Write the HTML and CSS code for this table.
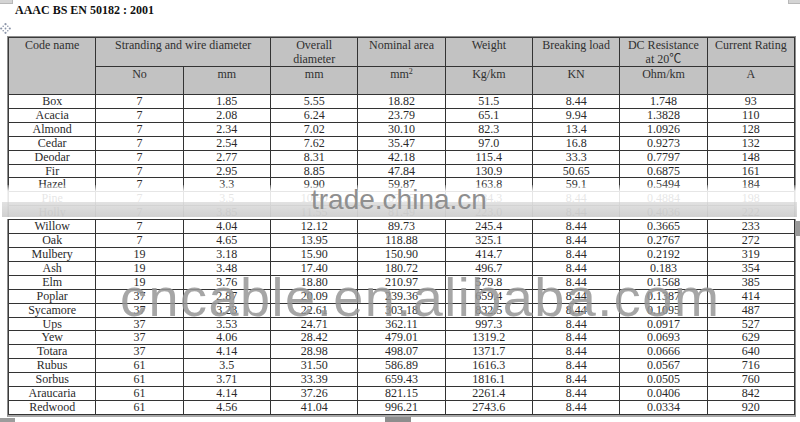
FILE: index.html
```html
<!DOCTYPE html>
<html>
<head>
<meta charset="utf-8">
<title>AAAC BS EN 50182 : 2001</title>
<link rel="stylesheet" href="styles.css">
</head>
<body>
<div class="page">
  <h1 class="title">AAAC BS EN 50182 : 2001</h1>
  <div class="handle">
    <svg class="handle-icon" width="11" height="11" viewBox="0 0 11 11">
      <g fill="#8a94a8">
        <circle cx="5.5" cy="1.2" r="1.1"/>
        <circle cx="5.5" cy="9.8" r="1.1"/>
        <circle cx="1.2" cy="5.5" r="1.1"/>
        <circle cx="9.8" cy="5.5" r="1.1"/>
        <circle cx="5.5" cy="5.5" r="0.9"/>
        <circle cx="3.2" cy="3.2" r="0.8"/>
        <circle cx="7.8" cy="3.2" r="0.8"/>
        <circle cx="3.2" cy="7.8" r="0.8"/>
        <circle cx="7.8" cy="7.8" r="0.8"/>
      </g>
    </svg>
  </div>
  <div class="frame">
    <table class="spec">
      <thead>
        <tr class="h1">
          <th rowspan="2">Code name</th>
          <th colspan="2">Stranding and wire diameter</th>
          <th>Overall<br>diameter</th>
          <th>Nominal area</th>
          <th>Weight</th>
          <th>Breaking load</th>
          <th>DC Resistance<br>at 20<span class="deg">℃</span></th>
          <th>Current Rating</th>
        </tr>
        <tr class="h2">
          <th>No</th>
          <th>mm</th>
          <th>mm</th>
          <th>mm<span class="sup">2</span></th>
          <th>Kg/km</th>
          <th>KN</th>
          <th>Ohm/km</th>
          <th>A</th>
        </tr>
      </thead>
      <tbody>
        <tr><td>Box</td><td>7</td><td>1.85</td><td>5.55</td><td>18.82</td><td>51.5</td><td>8.44</td><td>1.748</td><td>93</td></tr>
        <tr><td>Acacia</td><td>7</td><td>2.08</td><td>6.24</td><td>23.79</td><td>65.1</td><td>9.94</td><td>1.3828</td><td>110</td></tr>
        <tr><td>Almond</td><td>7</td><td>2.34</td><td>7.02</td><td>30.10</td><td>82.3</td><td>13.4</td><td>1.0926</td><td>128</td></tr>
        <tr><td>Cedar</td><td>7</td><td>2.54</td><td>7.62</td><td>35.47</td><td>97.0</td><td>16.8</td><td>0.9273</td><td>132</td></tr>
        <tr><td>Deodar</td><td>7</td><td>2.77</td><td>8.31</td><td>42.18</td><td>115.4</td><td>33.3</td><td>0.7797</td><td>148</td></tr>
        <tr><td>Fir</td><td>7</td><td>2.95</td><td>8.85</td><td>47.84</td><td>130.9</td><td>50.65</td><td>0.6875</td><td>161</td></tr>
        <tr><td>Hazel</td><td>7</td><td>3.3</td><td>9.90</td><td>59.87</td><td>163.8</td><td>59.1</td><td>0.5494</td><td>184</td></tr>
        <tr><td>Pine</td><td>7</td><td>3.5</td><td>10.50</td><td>67.35</td><td>184.3</td><td>8.44</td><td>0.4884</td><td>198</td></tr>
        <tr><td>Holly</td><td>7</td><td>3.85</td><td>11.55</td><td>81.49</td><td>223.0</td><td>8.44</td><td>0.4036</td><td>222</td></tr>
        <tr><td>Willow</td><td>7</td><td>4.04</td><td>12.12</td><td>89.73</td><td>245.4</td><td>8.44</td><td>0.3665</td><td>233</td></tr>
        <tr><td>Oak</td><td>7</td><td>4.65</td><td>13.95</td><td>118.88</td><td>325.1</td><td>8.44</td><td>0.2767</td><td>272</td></tr>
        <tr><td>Mulbery</td><td>19</td><td>3.18</td><td>15.90</td><td>150.90</td><td>414.7</td><td>8.44</td><td>0.2192</td><td>319</td></tr>
        <tr><td>Ash</td><td>19</td><td>3.48</td><td>17.40</td><td>180.72</td><td>496.7</td><td>8.44</td><td>0.183</td><td>354</td></tr>
        <tr><td>Elm</td><td>19</td><td>3.76</td><td>18.80</td><td>210.97</td><td>579.8</td><td>8.44</td><td>0.1568</td><td>385</td></tr>
        <tr><td>Poplar</td><td>37</td><td>2.87</td><td>20.09</td><td>239.36</td><td>659.4</td><td>8.44</td><td>0.1387</td><td>414</td></tr>
        <tr><td>Sycamore</td><td>37</td><td>3.23</td><td>22.61</td><td>303.18</td><td>832.5</td><td>8.44</td><td>0.1095</td><td>487</td></tr>
        <tr><td>Ups</td><td>37</td><td>3.53</td><td>24.71</td><td>362.11</td><td>997.3</td><td>8.44</td><td>0.0917</td><td>527</td></tr>
        <tr><td>Yew</td><td>37</td><td>4.06</td><td>28.42</td><td>479.01</td><td>1319.2</td><td>8.44</td><td>0.0693</td><td>629</td></tr>
        <tr><td>Totara</td><td>37</td><td>4.14</td><td>28.98</td><td>498.07</td><td>1371.7</td><td>8.44</td><td>0.0666</td><td>640</td></tr>
        <tr><td>Rubus</td><td>61</td><td>3.5</td><td>31.50</td><td>586.89</td><td>1616.3</td><td>8.44</td><td>0.0567</td><td>716</td></tr>
        <tr><td>Sorbus</td><td>61</td><td>3.71</td><td>33.39</td><td>659.43</td><td>1816.1</td><td>8.44</td><td>0.0505</td><td>760</td></tr>
        <tr><td>Araucaria</td><td>61</td><td>4.14</td><td>37.26</td><td>821.15</td><td>2261.4</td><td>8.44</td><td>0.0406</td><td>842</td></tr>
        <tr><td>Redwood</td><td>61</td><td>4.56</td><td>41.04</td><td>996.21</td><td>2743.6</td><td>8.44</td><td>0.0334</td><td>920</td></tr>
      </tbody>
    </table>
  </div>

  <div class="band">
    <div class="band-fade"></div>
    <div class="band-gray"></div>
    <div class="band-gap"></div>
  </div>
  <div class="wm-trade">trade.china.cn</div>
  <div class="wm-site">cncable.en.alibaba.com</div>

  <div class="deco deco-tl"></div>
  <div class="deco deco-tr"></div>
  <div class="deco deco-side"></div>
  <div class="deco deco-bl"></div>
  <div class="deco deco-tab"></div>
</div>
</body>
</html>
```

FILE: styles.css
```css
html, body {
  margin: 0;
  padding: 0;
  background: #ffffff;
}

body {
  font-family: "Liberation Serif", "Noto Sans CJK SC", serif;
  color: #222;
}

.page {
  position: relative;
  width: 800px;
  height: 422px;
  overflow: hidden;
}

.title {
  margin: 0;
  padding: 3px 0 0 15px;
  font-size: 12px;
  line-height: 14px;
  font-weight: bold;
  color: #111;
}

.handle {
  height: 13px;
  padding-top: 6px;
}

.handle-icon {
  display: block;
}

.frame {
  margin-left: 7px;
  width: 787px;
  border: 1px solid #8e8e8e;
  border-bottom: 2px solid #a8a8a8;
}

.spec {
  border-collapse: separate;
  border-spacing: 0;
  table-layout: fixed;
  width: 787px;
  border-top: 1px solid #3a3a3a;
  border-left: 1px solid #3a3a3a;
  font-size: 12px;
}

.spec th,
.spec td {
  border-right: 1px solid #333;
  border-bottom: 1px solid #333;
  padding: 0;
  text-align: center;
  vertical-align: top;
  font-weight: normal;
  white-space: nowrap;
  overflow: hidden;
}

.spec thead th {
  background: #c2c2c2;
  color: #303030;
  line-height: 14px;
}

.h1 th {
  height: 28px;
}

.h2 th {
  height: 27px;
}

.deg {
  line-height: 0;
}

.spec td {
  height: 12.9px;
  line-height: 12.9px;
  color: #2a2a2a;
}

.sup {
  font-size: 8px;
  line-height: 0;
  vertical-align: 4px;
}

/* watermark overlay band */
.band {
  position: absolute;
  left: 0;
  top: 185px;
  width: 800px;
}

.band-fade {
  height: 17px;
  background: linear-gradient(to bottom, rgba(255,255,255,0.2) 0%, rgba(255,255,255,0.88) 35%, rgba(255,255,255,0.88) 100%);
}

.band-gray {
  height: 15px;
  margin: 0 3px 0 2px;
  background: linear-gradient(to bottom, rgba(224,224,224,0.95), rgba(206,206,206,0.95));
}

.band-gap {
  height: 2px;
  background: #fff;
}

.wm-trade {
  position: absolute;
  left: 311px;
  top: 186px;
  font-family: "Liberation Sans", Arial, sans-serif;
  font-size: 28px;
  line-height: 28px;
  color: #8f8f8f;
  white-space: nowrap;
}

.wm-site {
  position: absolute;
  left: 120px;
  top: 270px;
  font-family: "Liberation Sans", Arial, sans-serif;
  font-size: 54px;
  line-height: 54px;
  letter-spacing: 1.5px;
  color: rgba(150, 150, 150, 0.85);
  white-space: nowrap;
}

/* small screenshot artifacts at the edges */
.deco {
  position: absolute;
  background: #d4d4d4;
}

.deco-tl {
  left: 0;
  top: 0;
  width: 12px;
  height: 3px;
  border: 1px solid #b8b8b8;
  border-top: 0;
  border-left: 0;
}

.deco-tr {
  right: 0;
  top: 0;
  width: 11px;
  height: 3px;
  border: 1px solid #b8b8b8;
  border-top: 0;
  border-right: 0;
}

.deco-side {
  right: 0;
  top: 221px;
  width: 5px;
  height: 15px;
  background: #9a9a9a;
}

.deco-bl {
  left: 0;
  bottom: 0;
  width: 15px;
  height: 4px;
  background: #9c9c9c;
}

.deco-tab {
  left: 385px;
  bottom: 0;
  width: 26px;
  height: 5px;
  background: #8d8d8d;
}
```
